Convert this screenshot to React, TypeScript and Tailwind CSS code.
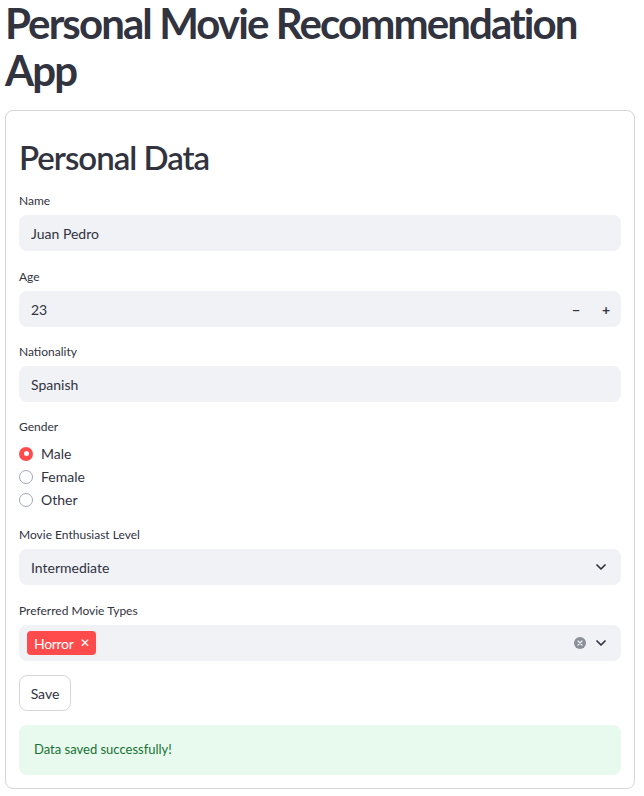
import React from 'react';

const Label = ({ children }: { children: React.ReactNode }) => (
  <div className="flex h-[20px] items-center text-[12px] leading-[16px] text-[#31333F]">{children}</div>
);

const Chevron = () => (
  <svg width="16" height="16" viewBox="0 0 24 24" fill="none" stroke="#31333F" strokeWidth="2.6" strokeLinecap="round" strokeLinejoin="round">
    <path d="M6 9l6 6 6-6" />
  </svg>
);

const Radio = ({ checked, label }: { checked?: boolean; label: string }) => (
  <div className="flex h-[23px] items-center gap-[8px]">
    {checked ? (
      <span className="flex h-[14px] w-[14px] items-center justify-center rounded-full bg-[#FF4B4B]">
        <span className="h-[5px] w-[5px] rounded-full bg-white" />
      </span>
    ) : (
      <span className="h-[14px] w-[14px] rounded-full border border-[#a3a8b8] bg-white" />
    )}
    <span className="text-[14px] text-[#31333F]">{label}</span>
  </div>
);

export default function App() {
  return (
    <div className="min-h-screen bg-white px-[5px] font-['Lato',sans-serif] text-[#31333F]">
      <h1 className="text-[42px] font-bold leading-[47px] tracking-[-1.9px]">Personal Movie Recommendation App</h1>

      <div className="mt-[16px] w-[630px] rounded-[8px] border border-[#d6d6d9] px-[13px] pb-[13px] pt-[26px]">
        <h2 className="text-[33px] font-semibold leading-[40px] tracking-[-1px]">Personal Data</h2>

        <div className="mt-[14px]">
          <Label>Name</Label>
          <div className="mt-[4px] flex h-[36px] items-center rounded-[8px] bg-[#F0F2F6] pl-[12px] text-[14px]">Juan Pedro</div>
        </div>

        <div className="mt-[16px]">
          <Label>Age</Label>
          <div className="mt-[4px] flex h-[36px] items-center rounded-[8px] bg-[#F0F2F6] pl-[12px] text-[14px]">
            <span className="flex-1">23</span>
            <span className="flex w-[30px] justify-center text-[14px] font-bold">−</span>
            <span className="flex w-[30px] justify-center text-[14px] font-bold">+</span>
          </div>
        </div>

        <div className="mt-[15px]">
          <Label>Nationality</Label>
          <div className="mt-[4px] flex h-[36px] items-center rounded-[8px] bg-[#F0F2F6] pl-[12px] text-[14px]">Spanish</div>
        </div>

        <div className="mt-[15px]">
          <Label>Gender</Label>
          <div className="mt-[5px]">
            <Radio checked label="Male" />
            <Radio label="Female" />
            <Radio label="Other" />
          </div>
        </div>

        <div className="mt-[14px]">
          <Label>Movie Enthusiast Level</Label>
          <div className="mt-[4px] flex h-[36px] items-center rounded-[8px] bg-[#F0F2F6] pl-[12px] pr-[12px] text-[14px]">
            <span className="flex-1">Intermediate</span>
            <Chevron />
          </div>
        </div>

        <div className="mt-[16px]">
          <Label>Preferred Movie Types</Label>
          <div className="mt-[4px] flex h-[36px] items-center rounded-[8px] bg-[#F0F2F6] pl-[8px] pr-[12px] text-[14px]">
            <div className="flex-1">
              <span className="inline-flex h-[24px] items-center gap-[6px] rounded-[4px] bg-[#FF4B4B] px-[7px] text-[14px] tracking-[-0.3px] text-white">
                Horror
                <span className="text-[12px] leading-none">✕</span>
              </span>
            </div>
            <span className="mr-[7px] flex h-[12px] w-[12px] items-center justify-center rounded-full bg-[#8b8f9a]">
              <svg width="6" height="6" viewBox="0 0 6 6" stroke="#F0F2F6" strokeWidth="1.2" strokeLinecap="round">
                <path d="M1 1l4 4M5 1l-4 4" />
              </svg>
            </span>
            <Chevron />
          </div>
        </div>

        <button className="mt-[14px] flex h-[36px] w-[52px] items-center justify-center rounded-[8px] border border-[#d6d6d9] bg-white text-[14px] text-[#31333F]">
          Save
        </button>

        <div className="mt-[14px] flex h-[50px] items-center rounded-[8px] bg-[#E8F9EE] px-[15px] text-[13px] text-[#177233]">
          Data saved successfully!
        </div>
      </div>
    </div>
  );
}
